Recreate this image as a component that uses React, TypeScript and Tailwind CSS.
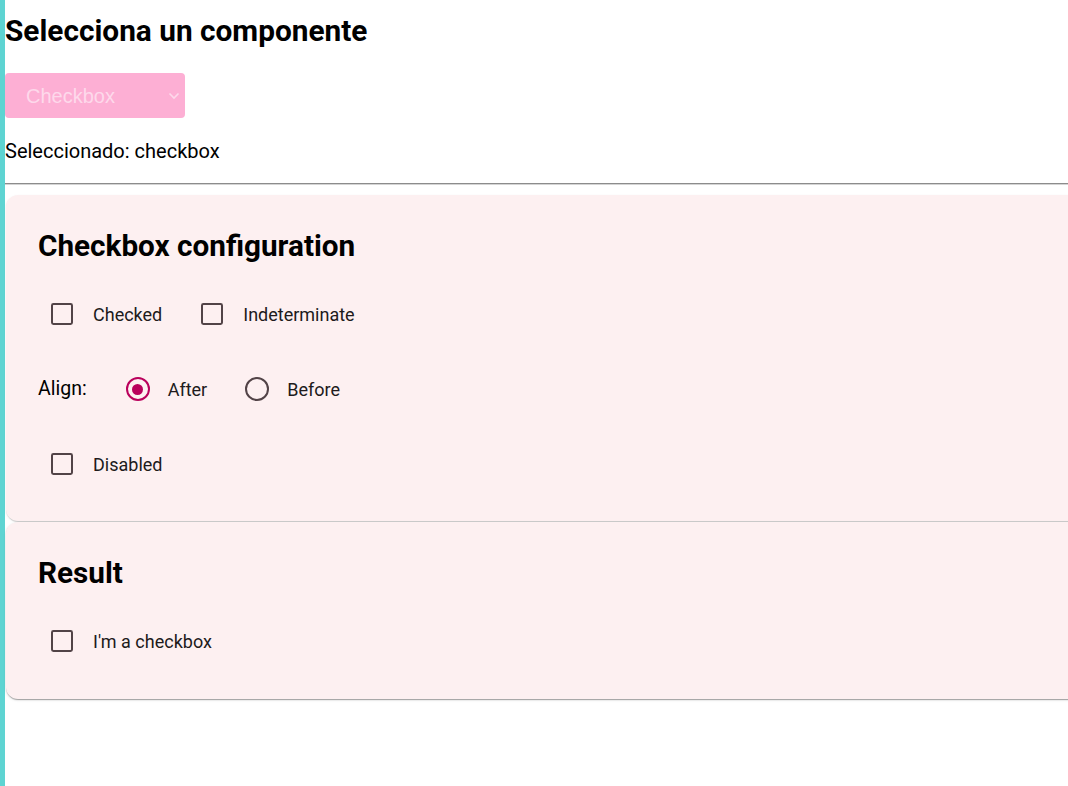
import React from "react";

const roboto = { fontFamily: "Roboto, 'Noto Sans', sans-serif" };

function Checkbox({ label }: { label: string }) {
  return (
    <div className="flex items-center h-[48px]">
      <div className="w-[48px] h-[48px] flex items-center justify-center">
        <div className="w-[21.6px] h-[21.6px] border-[2.4px] border-[#524347] rounded-[2.4px]" />
      </div>
      <span className="ml-[7px] text-[18px] text-[#201a1b]">{label}</span>
    </div>
  );
}

function Radio({ label, checked }: { label: string; checked?: boolean }) {
  return (
    <div className="flex items-center h-[48px]">
      <div className="w-[48px] h-[48px] flex items-center justify-center">
        <div
          className={
            "w-[24px] h-[24px] rounded-full border-[2.4px] flex items-center justify-center " +
            (checked ? "border-[#ba005c]" : "border-[#524347]")
          }
        >
          {checked && <div className="w-[11px] h-[11px] rounded-full bg-[#ba005c]" />}
        </div>
      </div>
      <span className="ml-[6px] text-[18px] text-[#201a1b]">{label}</span>
    </div>
  );
}

export default function App() {
  return (
    <div className="flex min-h-[786px] overflow-hidden bg-white text-black" style={roboto}>
      <div className="w-[5px] shrink-0 bg-[#5ed4d2]" />
      <div className="flex-1 flex flex-col min-w-0">
        <h1 className="pt-[14px] text-[29.8px] leading-[34px] font-bold">Selecciona un componente</h1>
        <div
          className="mt-[25px] w-[180px] h-[45px] rounded-[4px] bg-[#fdafd4] flex items-center pl-[21px] pr-[5px] text-[20px] text-[#fdd9eb]"
          style={{ fontFamily: "'Liberation Sans', Arial, sans-serif" }}
        >
          <span className="flex-1">Checkbox</span>
          <svg width="12" height="8" viewBox="0 0 12 8" fill="none">
            <path d="M1.5 1.5 L6 6 L10.5 1.5" stroke="#fdd9eb" strokeWidth="1.6" />
          </svg>
        </div>
        <p className="mt-[22px] text-[20px] leading-[23px]">Seleccionado: checkbox</p>
        <div className="mt-[20px] h-[1px] bg-[#8c8c8c] border-b border-[#d4d4d4] box-content" />
        <div className="mt-[10px] ml-[1px] mr-[-20px] flex flex-col">
          <section className="bg-[#fdf0f1] rounded-[12px] shadow-[0_2px_1px_-1px_rgba(0,0,0,0.12),0_1px_1px_0_rgba(0,0,0,0.07),0_1px_3px_0_rgba(0,0,0,0.06)] pl-[32px] pt-[33px] pb-[33px]">
            <h2 className="text-[29.7px] leading-[36px] font-bold">Checkbox configuration</h2>
            <div className="mt-[26px] flex flex-col gap-[27px]">
              <div className="flex items-center gap-[26px]">
                <Checkbox label="Checked" />
                <Checkbox label="Indeterminate" />
              </div>
              <div className="flex items-center">
                <span className="text-[19.5px] mr-[27px]">Align:</span>
                <Radio label="After" checked />
                <div className="w-[26px]" />
                <Radio label="Before" />
              </div>
              <div className="flex items-center">
                <Checkbox label="Disabled" />
              </div>
            </div>
          </section>
          <section className="mt-[1px] bg-[#fdf0f1] rounded-[12px] shadow-[0_2px_1px_-1px_rgba(0,0,0,0.2),0_1px_1px_0_rgba(0,0,0,0.14),0_1px_3px_0_rgba(0,0,0,0.12)] pl-[32px] pt-[33px] pb-[34px]">
            <h2 className="text-[29.7px] leading-[36px] font-bold">Result</h2>
            <div className="mt-[26px] flex items-center">
              <Checkbox label="I'm a checkbox" />
            </div>
          </section>
        </div>
      </div>
    </div>
  );
}
